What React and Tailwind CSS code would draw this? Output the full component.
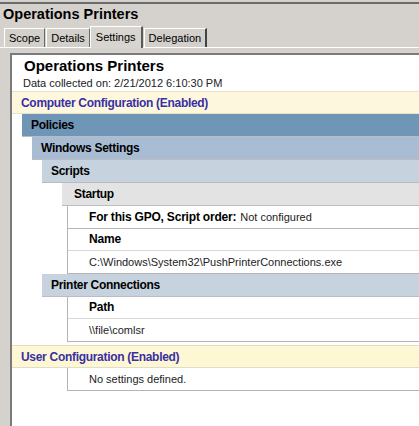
import React from "react";

const font = { fontFamily: '"Liberation Sans", Arial, sans-serif' };

function Bar({ left, bg, children, pl = "pl-[9px]" }) {
  return (
    <div
      className={`h-[23px] flex items-center ${bg} border-b border-[#b9bcc2] ${pl} text-black font-bold text-[12px] tracking-[-0.3px]`}
      style={{ marginLeft: left }}
    >
      {children}
    </div>
  );
}

function Row({ children }) {
  return (
    <div className="ml-[55px] h-[23px] flex items-center border-l border-b border-[#b4b4b4] pl-[21px] text-[11px] text-[#222]">
      {children}
    </div>
  );
}

function Pair({ label, value }) {
  return (
    <div className="ml-[55px] border-l border-b border-[#b4b4b4]">
      <div className="h-[22px] flex items-end pb-[2px] pl-[21px] font-bold text-[12px] tracking-[-0.2px] border-b border-[#d8d8d8]">
        {label}
      </div>
      <div className="h-[22px] flex items-center pl-[21px] text-[11px] text-[#222]">
        {value}
      </div>
    </div>
  );
}

function Tab({ children, active, className = "" }) {
  if (active) {
    return (
      <div className={`h-[22px] px-[5px] flex items-center bg-[#d8d4cf] border-t border-l border-white border-r-2 border-r-[#5a5a5a] text-[11px] -mb-[1px] relative z-10 ${className}`}>
        {children}
      </div>
    );
  }
  return (
    <div className={`h-[19px] px-[4px] flex items-center bg-[#d3cfca] border-t border-l border-white border-r border-r-[#6a6a6a] text-[11px] ${className}`}>
      {children}
    </div>
  );
}

export default function App() {
  return (
    <div className="w-[419px] h-[426px] bg-[#d5d1cc] overflow-hidden text-black" style={font}>
      <div className="h-[2px]" />
      <div className="border-t-2 border-[#6b6b6b]" />
      <div className="h-[21px] pl-[3px] flex items-center font-bold text-[14.5px]">
        Operations Printers
      </div>
      <div className="flex items-end pl-[4px] h-[23px] border-b border-white gap-[1px]">
        <Tab>Scope</Tab>
        <Tab>Details</Tab>
        <Tab active className="-ml-[1px]">Settings</Tab>
        <Tab className="border-r-2 border-r-[#444]">Delegation</Tab>
      </div>
      <div className="h-[5px]" />
      <div className="ml-[10px] h-[400px] bg-white border-l-2 border-t-2 border-[#7a7a7a]">
        <div className="pl-[12px] pt-[2px] h-[21px] font-bold text-[15px] leading-[18px]">
          Operations Printers
        </div>
        <div className="pl-[11px] h-[15px] text-[11px] leading-[14px] text-[#222]">
          Data collected on: 2/21/2012 6:10:30 PM
        </div>
        <div className="h-[23px] flex items-center bg-[#fdf7dd] border-t border-b border-[#e8e2c8] pl-[9px] text-[#3a2fa4] font-bold text-[12px] tracking-[-0.3px]">
          Computer Configuration (Enabled)
        </div>
        <Bar left="10px" bg="bg-[#6f95b7]">Policies</Bar>
        <Bar left="20px" bg="bg-[#a8bdd4]">Windows Settings</Bar>
        <Bar left="30px" bg="bg-[#c6d2de]">Scripts</Bar>
        <Bar left="50px" bg="bg-[#e3e3e3]" pl="pl-[12px]">Startup</Bar>
        <Row>
          <span className="font-bold text-[12px] tracking-[-0.2px] text-black">For this GPO, Script order:</span>
          <span className="ml-[4px]">Not configured</span>
        </Row>
        <Pair label="Name" value="C:\Windows\System32\PushPrinterConnections.exe" />
        <Bar left="30px" bg="bg-[#c6d2de]">Printer Connections</Bar>
        <Pair label="Path" value="\\file\comlsr" />
        <div className="h-[3px]" />
        <div className="h-[23px] flex items-center bg-[#fdf7d3] border-t border-b border-[#e0dcc8] pl-[9px] text-[#3a2fa4] font-bold text-[12px] tracking-[-0.3px]">
          User Configuration (Enabled)
        </div>
        <Row>No settings defined.</Row>
      </div>
    </div>
  );
}
